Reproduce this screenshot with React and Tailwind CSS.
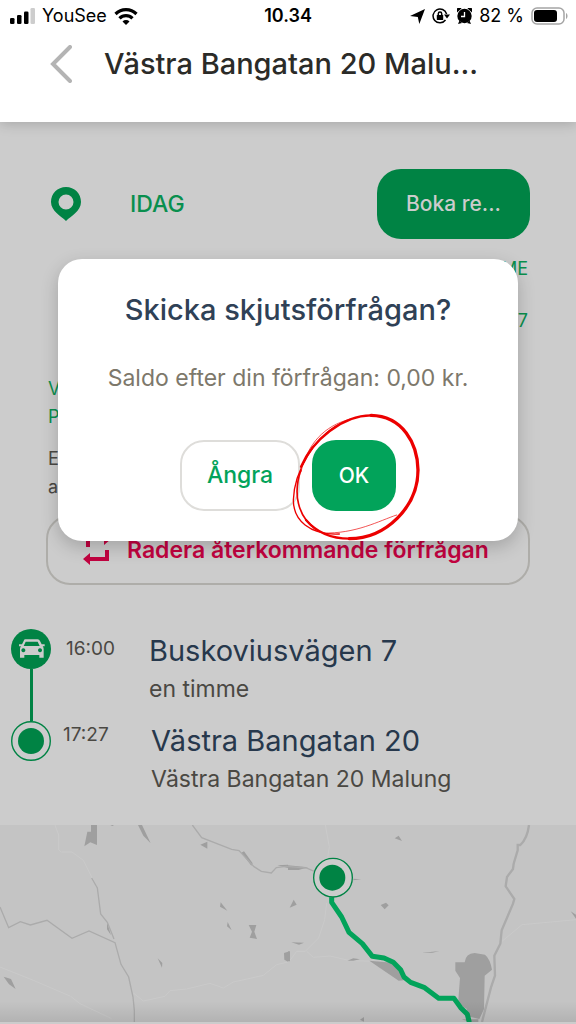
const StatusBar = () => (
    <div className="flex h-8 items-center px-2 font-['Inter',sans-serif] text-lg text-black">
        <div className="flex flex-1 items-center gap-[7px]">
            <svg width="27" height="16" viewBox="0 0 27 16" fill="#000" aria-hidden="true">
                <rect x="2" y="10" width="4.500" height="6" rx="1.3" />
                <rect x="9" y="7" width="4.500" height="9" rx="1.3" />
                <rect x="16" y="3.500" width="4.500" height="12.500" rx="1.3" />
                <rect x="22.500" y="0" width="4.500" height="16" rx="1.3" fill="#cdcdcd" />
            </svg>
            <span>YouSee</span>
            <svg width="24" height="17" viewBox="0 0 24 17" fill="none" stroke="#000" strokeWidth="3.200" aria-hidden="true">
                <path d="M1.500 6a15 15 0 0 1 21 0" />
                <path d="M5.500 10.300a9.200 9.200 0 0 1 13 0" />
                <path d="M12 17l-3.500-3.500a5 5 0 0 1 7 0z" fill="#000" stroke="none" />
            </svg>
        </div>
        <span className="font-semibold">10.34</span>
        <div className="flex flex-1 items-center justify-end gap-[7px]">
            <svg width="15" height="15" viewBox="0 0 15 15" aria-hidden="true">
                <path d="M15 0L9.300 15 7.800 7.900 0 7z" />
            </svg>
            <svg width="18" height="16" viewBox="0 0 18 16" fill="none" stroke="#000" strokeWidth="1.500" aria-hidden="true">
                <path d="M14.600 6A6.900 6.900 0 1 0 13.500 12" />
                <path d="M12 6.500h6l-3 4z" fill="#000" stroke="none" />
                <rect x="4.800" y="7" width="6.400" height="5" rx=".6" fill="#000" stroke="none" />
                <path d="M6.300 7V5.700a1.700 1.700 0 0 1 3.400 0V7" />
            </svg>
            <svg width="15" height="16" viewBox="0 0 15 16" aria-hidden="true">
                <circle cx="7.500" cy="8" r="7.200" />
                <path d="M0 4.500a3 3 0 0 1 4.500-4zM15 4.500a3 3 0 0 0-4.500-4zM1 16l1.500-3.500L5 15zM14 16l-1.500-3.500L10 15z" />
                <path d="M7.500 4v4.500H4" fill="none" stroke="#fff" strokeWidth="1.300" />
            </svg>
            <span>82 %</span>
            <svg width="37" height="18" viewBox="0 0 37 18" aria-hidden="true">
                <rect x="1" y="1" width="32" height="16" rx="5" fill="none" stroke="#a5a5a5" strokeWidth="1.500" />
                <rect x="3" y="3" width="23" height="12" rx="3" />
                <path d="M35 6c2 1 2 5 0 6z" fill="#a5a5a5" />
            </svg>
        </div>
    </div>
);

const StopMarker = () => (
    <svg className="size-10 shrink-0" viewBox="0 0 40 40" aria-hidden="true">
        <circle cx="20" cy="20" r="19.300" fill="none" stroke="#008344" strokeWidth="1.400" />
        <circle cx="20" cy="20" r="13" fill="#008344" />
    </svg>
);

const CarMarker = () => (
    <svg className="size-10 shrink-0" viewBox="0 0 120 120" aria-hidden="true">
        <circle cx="60" cy="60" r="60" fill="#008344" />
        <path
            fill="#ccc"
            fillRule="evenodd"
            d="M42 31h38q5 0 7 5l5 10h9v6h-6q3 3 3 8v26H85v-8H40v8H27V60q0-5 3-8h-6v-6h9l5-10q1-5 4-5zM44 38l-6 13h48l-6-13zM37 58a6 6 0 1 0 .1 0zM87 58a6 6 0 1 0 .1 0z"
        />
    </svg>
);

const RouteMap = () => (
    <svg className="block w-full" viewBox="0 31 1728 591" fill="none" role="img" aria-label="Karta">
        <defs>
            <linearGradient id="fade" x1="0" y1="0" x2="0" y2="1">
                <stop offset="0" stopColor="#000" stopOpacity="0" />
                <stop offset="1" stopColor="#000" stopOpacity=".09" />
            </linearGradient>
        </defs>
        <rect y="31" width="1728" height="591" fill="#c4c4c4" />
        {/* small roads */}
        <g stroke="#cacaca" strokeWidth="3">
            <path d="M165 31l11 30v45l8 6h32l34 25 25 50 16 32M0 457l100 40 112 48 28 22 95 45M400 535l30 24 65-14 15-17 50-5 70-17 40 14 30-18 90-20 40-32 34-8" />
            <path d="M976 31l12 65-6 40M980 265l-6 50-18 55-40 40H890l-22 30M920 410l20 18 50-4 60 14 80 2M1506 380l60-50 162-15" />
        </g>
        {/* lakes and built-up areas */}
        <g fill="#9f9f9f">
            <path d="M273 31h18v60l-20-8-18 12 9-44h11zM414 31h12l26 55-22-23zM601 90l21-9v21zM724 114l8-4 26 36-4 7zM662 263l20 25-22-12zM683 322l12 25-14-12zM746 331h23l-6 20 8 22-22-4 7-18zM852 415l12-4v30l-11-6zM473 431l14 14-1 14zM11 486l22 7 14 30-20-14zM321 322l12 40-12-18zM832 152l32-2v10zM331 31h11l-5 3z" />
            <path d="M1184 71l12-8 10 16zM1142 271l16-7 8 8-12 12zM869 279l12-24 9 15zM864 410h6v30h-6zM1712 290l16 10v12zM1042 438l18-7 20 3-20 4zM1264 415l54-6-20 5zM874 383l38 1-15 6zM1060 192l24 2-24 3zM1080 615l12-8v14z" />
            <path d="M1108 438l70 6 40 52-22 2zM1366 443h28q3-27 30-28l31 5q15 12 21 45l-22 18-2 100-14 30-42-10 5-20-27-15 6-78-14-22z" />
            <path d="M864 152l60 6-28 8h-32zM1385 614h50v8h-25z" />
        </g>
        <g stroke="#ababab" strokeWidth="4">
            <path d="M0 277l26 62 35-18 30 10 50-14 75 54 51-22 78 35 18 65 23 38 13 60 4 40v44l-4 14M275 190l17 30 10 78 20 25 20 50M577 31l28 38 90 35 22 4 45 48 22 14 30 5 15-16 30-4 60 5 22 9 36 10" />
            <path d="M1587 31q-5 40-26 60h-8v16l-12 40-2 16-18 24-4 28 26 38-4 14-34 80-4 40-18 36 2 60-12 35-27 104" strokeWidth="7" />
        </g>
        <path d="M995 248v15l30 44 22 46 40 34 30 38 35 5 28 13 22 22 10 22 20 16 42 16 42 32h46l20 28 20 20 6 24" stroke="#02a35a" strokeWidth="15" strokeLinejoin="round" />
        <rect y="560" width="1728" height="62" fill="url(#fade)" />
        <circle cx="999" cy="189" r="58" fill="#ccc" stroke="#008344" strokeWidth="4" />
        <circle cx="997" cy="189" r="39" fill="#008344" />
    </svg>
);

const HandDrawnCircle = () => (
    <svg
        className="pointer-events-none absolute -left-6 -top-7 size-[132px]"
        viewBox="-4 186 396 396"
        fill="none"
        stroke="#ec0000"
        strokeLinecap="round"
        aria-hidden="true"
    >
        <path d="M322 495C270 512 200 552 100 549" strokeWidth="2" />
        <path d="M150 552C60 556 12 510 12 450C14 370 75 250 170 213" strokeWidth="4" />
        <path d="M35 365C55 280 105 228 180 208" strokeWidth="2" />
        <path d="M35 350C70 270 160 196 245 196" strokeWidth="7" />
        <path d="M245 196C340 198 385 280 386 360C386 470 290 566 180 566" strokeWidth="10" />
        <path d="M180 566C120 566 80 545 50 510" strokeWidth="7" />
        <path d="M80 538C25 500 10 430 35 360" strokeWidth="5" />
    </svg>
);

const ConfirmDialog = () => (
    <div className="absolute inset-x-0 top-[259px] px-[58px]">
        <div
            role="dialog"
            aria-labelledby="dialog-title"
            className="flex flex-col items-center rounded-3xl bg-white pt-[33px] pb-[30px] shadow-[0_6px_18px_rgba(0,0,0,0.2)]"
        >
            <h2 id="dialog-title" className="text-[29px] leading-9 font-medium text-[#2f4156]">
                Skicka skjutsförfrågan?
            </h2>
            <p className="mt-[34px] text-[23px] leading-8 text-[#7d786b]">Saldo efter din förfrågan: 0,00 kr.</p>
            <div className="mt-[46px] flex gap-3">
                <button className="h-[71px] w-[120px] rounded-3xl border-2 border-[#deddda] text-[23px] font-medium text-[#02a35a]">
                    Ångra
                </button>
                <div className="relative">
                    <button className="h-[71px] w-[84px] rounded-3xl bg-[#02a35a] text-[21px] font-medium text-white">
                        OK
                    </button>
                    <HandDrawnCircle />
                </div>
            </div>
        </div>
    </div>
);

const App = () => {
    return (
        <div className="relative flex min-h-screen flex-col bg-[#ccc] font-['Inter',sans-serif]">
            <header className="relative bg-white pb-[26px] shadow-[0_2px_12px_rgba(0,0,0,0.18)]">
                <StatusBar />
                <div className="flex h-16 items-center gap-8 pr-10 pl-[50px]">
                    <button aria-label="Tillbaka">
                        <svg width="22" height="38" viewBox="0 0 22 38" fill="none" stroke="#b4b4b4" strokeWidth="4" strokeLinecap="round">
                            <path d="M20 2L3 19l17 17" />
                        </svg>
                    </button>
                    <h1 className="text-[29px] font-medium text-[#2b2b28]">Västra Bangatan 20 Malu...</h1>
                </div>
            </header>

            <main className="flex-1">
                <section className="px-[46px] pt-[47px]">
                    <div className="flex h-[70px] items-center">
                        <svg className="ml-1" width="32" height="34" viewBox="0 0 32 34" aria-hidden="true">
                            <path
                                d="M16 0C7.500 0 1 6.600 1 15c0 9 10 14 15 19 5-5 15-10 15-19C31 6.600 24.500 0 16 0zm0 7.500a7.500 7.500 0 1 1 0 15 7.500 7.500 0 0 1 0-15z"
                                fill="#008344"
                            />
                        </svg>
                        <span className="ml-12 flex-1 text-[23px] font-medium text-[#098f4e]">IDAG</span>
                        <button className="h-[70px] w-[153px] rounded-3xl bg-[#008344] text-[21px] font-medium text-[#ccc]">
                            Boka re...
                        </button>
                    </div>
                    <div className="mt-4 pr-0.5 text-right text-lg leading-7 text-[#098f4e]">
                        <p>ME</p>
                        <p className="mt-6">7</p>
                    </div>
                    <div className="mt-10 pl-0.5 text-lg leading-7 text-[#098f4e]">
                        <p>V</p>
                        <p>P</p>
                    </div>
                    <div className="mt-3.5 pl-0.5 text-lg leading-7 text-[#4a4843]">
                        <p>E</p>
                        <p>a</p>
                    </div>
                    <button className="mt-3.5 flex h-[70px] w-full items-center gap-4 rounded-3xl border-2 border-[#aeada9] pl-[35px] text-[23px] font-semibold whitespace-nowrap text-[#c20340]">
                        <svg width="28" height="32" viewBox="0 0 28 32" fill="none" stroke="#c20340" strokeWidth="4" aria-hidden="true">
                            <path d="M5 13V5h17" />
                            <path d="M24 16v9H6" />
                            <path d="M21 0v11l7-6zM7 19v12l-7-6z" fill="#c20340" stroke="none" />
                        </svg>
                        Radera återkommande förfrågan
                    </button>
                </section>

                <section className="pt-11 pl-[11px]">
                    <div className="flex">
                        <div className="flex flex-col items-center">
                            <CarMarker />
                            <div className="w-[3px] flex-1 bg-[#008344]" />
                        </div>
                        <time className="w-[98px] pt-1.5 pl-[15px] text-[19px] text-[#4a4843]">16:00</time>
                        <div className="pb-4">
                            <h3 className="text-[29px] leading-[44px] text-[#27384c]">Buskoviusvägen 7</h3>
                            <p className="text-[23px] leading-8 text-[#4a4843]">en timme</p>
                        </div>
                    </div>
                    <div className="flex">
                        <StopMarker />
                        <time className="w-[100px] pl-3 text-[19px] text-[#4a4843]">17:27</time>
                        <div className="pb-7">
                            <h3 className="text-[29px] leading-10 text-[#27384c]">Västra Bangatan 20</h3>
                            <p className="text-[23px] leading-9 text-[#4a4843]">Västra Bangatan 20 Malung</p>
                        </div>
                    </div>
                </section>

                <RouteMap />
            </main>

            <ConfirmDialog />
        </div>
    );
};

export default App;
